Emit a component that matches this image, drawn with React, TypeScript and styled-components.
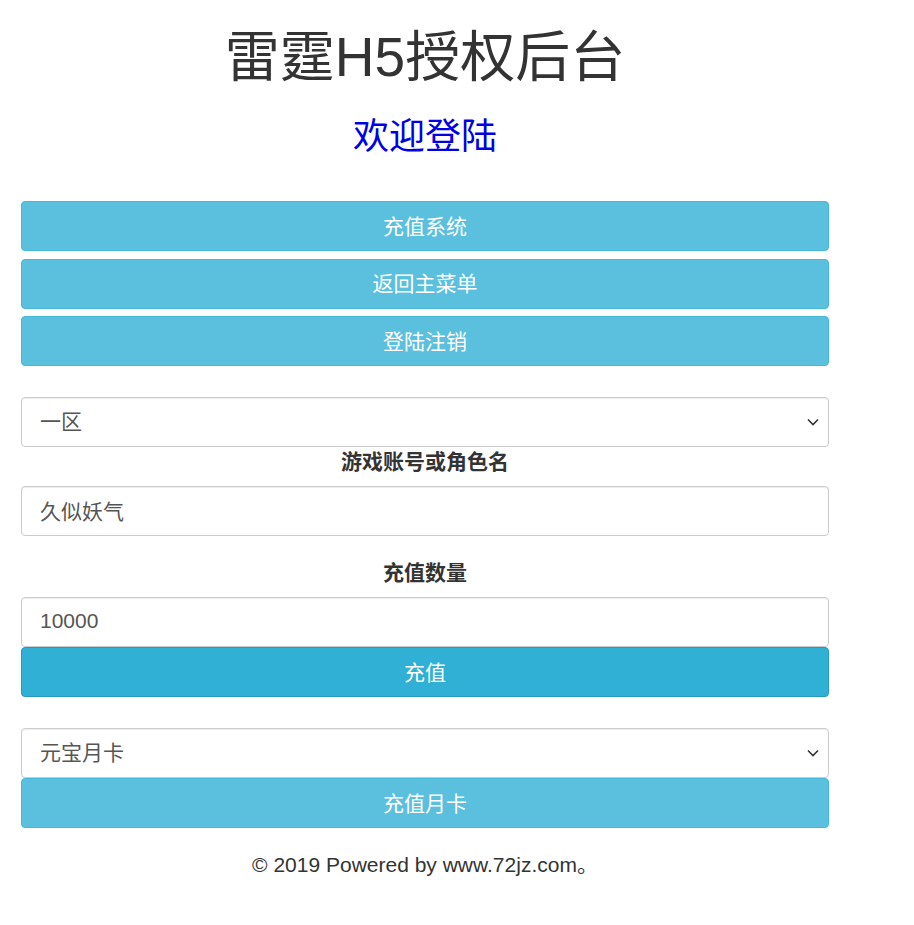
import React from "react";
import styled, { createGlobalStyle } from "styled-components";

const Global = createGlobalStyle`
  html, body { margin: 0; padding: 0; background: #fff; }
  body {
    font-family: "Liberation Sans", "Noto Sans CJK SC", sans-serif;
    font-size: 21px;
    color: #333;
  }
  * { box-sizing: border-box; }
`;

const Page = styled.div`
  width: 808px;
  margin: 0 0 0 21px;
  padding-top: 24px;
  padding-bottom: 40px;
  display: flex;
  flex-direction: column;
`;

const Title = styled.h1`
  margin: 0;
  font-size: 55px;
  line-height: 66px;
  font-weight: 400;
  text-align: center;
  color: #333;
`;

const Welcome = styled.h2`
  margin: 27px 0 0;
  font-size: 36px;
  line-height: 40px;
  font-weight: 400;
  text-align: center;
  color: #0000e6;
`;

const Menu = styled.div`
  margin-top: 44px;
  display: flex;
  flex-direction: column;
  gap: 7.5px;
`;

const Button = styled.button<{ $active?: boolean }>`
  display: block;
  width: 100%;
  height: 50px;
  margin: 0;
  padding: 0 0 3px;
  font-family: inherit;
  font-size: 21px;
  color: #fff;
  background: ${(p) => (p.$active ? "#31b0d5" : "#5bc0de")};
  border: 1px solid ${(p) => (p.$active ? "#269abc" : "#46b8da")};
  border-radius: 4px;
  cursor: pointer;
`;

const Section = styled.div<{ $mt: number }>`
  margin-top: ${(p) => p.$mt}px;
  display: flex;
  flex-direction: column;
`;

const SelectWrap = styled.div`
  position: relative;
  width: 100%;
`;

const Select = styled.select`
  width: 100%;
  height: 50px;
  appearance: none;
  -webkit-appearance: none;
  padding: 0 40px 2px 18px;
  font-family: inherit;
  font-size: 21px;
  color: #555;
  background: #fff;
  border: 1px solid #ccc;
  border-radius: 4px;
  box-shadow: inset 0 1px 1px rgba(0, 0, 0, 0.075);
  outline: none;
`;

const Chevron = styled.svg`
  position: absolute;
  right: 10px;
  top: 50%;
  width: 12px;
  height: 8px;
  margin-top: -4px;
  pointer-events: none;
`;

const Input = styled.input`
  width: 100%;
  height: 50px;
  padding: 0 18px 2px;
  font-family: inherit;
  font-size: 21px;
  color: #555;
  background: #fff;
  border: 1px solid #ccc;
  border-radius: 4px;
  box-shadow: inset 0 1px 1px rgba(0, 0, 0, 0.075);
  outline: none;
`;

const Label = styled.label<{ $mt: number }>`
  display: block;
  margin: ${(p) => p.$mt}px 0 10px;
  font-size: 21px;
  line-height: 28px;
  font-weight: 700;
  text-align: center;
  color: #333;
`;

const Footer = styled.p`
  margin: 23px 0 0;
  font-size: 21px;
  line-height: 28px;
  text-align: center;
  color: #333;
`;

const Arrow = () => (
  <Chevron viewBox="0 0 12 8">
    <path d="M1 1.5 L6 6.5 L11 1.5" fill="none" stroke="#333" strokeWidth="1.6" />
  </Chevron>
);

export default function App() {
  return (
    <>
      <Global />
      <Page>
        <Title>雷霆H5授权后台</Title>
        <Welcome>欢迎登陆</Welcome>
        <Menu>
          <Button>充值系统</Button>
          <Button>返回主菜单</Button>
          <Button>登陆注销</Button>
        </Menu>
        <Section $mt={31}>
          <SelectWrap>
            <Select defaultValue="1">
              <option value="1">一区</option>
              <option value="2">二区</option>
            </Select>
            <Arrow />
          </SelectWrap>
          <Label $mt={1}>游戏账号或角色名</Label>
          <Input defaultValue="久似妖气" />
          <Label $mt={23}>充值数量</Label>
          <Input defaultValue="10000" />
          <Button $active>充值</Button>
        </Section>
        <Section $mt={31}>
          <SelectWrap>
            <Select defaultValue="yk">
              <option value="yk">元宝月卡</option>
            </Select>
            <Arrow />
          </SelectWrap>
          <Button>充值月卡</Button>
        </Section>
        <Footer>© 2019 Powered by www.72jz.com。</Footer>
      </Page>
    </>
  );
}
